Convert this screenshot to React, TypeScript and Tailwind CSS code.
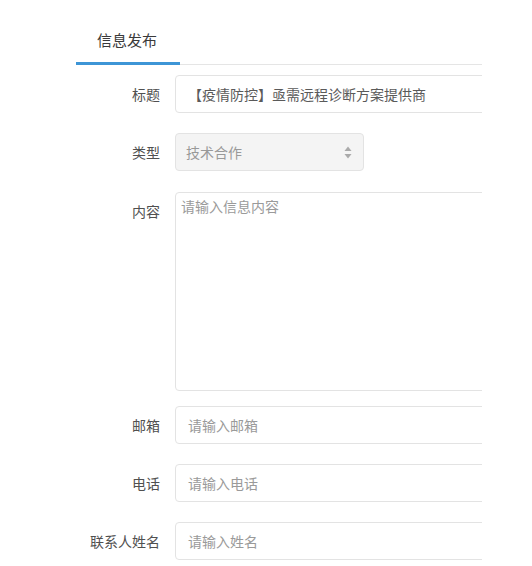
import React from "react";

const font = { fontFamily: '"Noto Sans CJK SC", "Noto Sans", sans-serif' };

function Label({ text }: { text: string }) {
  return (
    <div className="w-[84px] shrink-0 h-[38px] flex items-center justify-end text-[14px] text-[#505050]">
      {text}
    </div>
  );
}

function Field({ label, placeholder, value, mt }: { label: string; placeholder?: string; value?: string; mt: string }) {
  return (
    <div className={`flex gap-[15px] ${mt}`}>
      <Label text={label} />
      <div className="w-[420px] shrink-0 h-[38px] border border-[#e3e3e3] rounded-[4px] bg-white flex items-center pl-[12px] text-[14px]">
        {value ? <span className="text-[#5a5a5a]">{value}</span> : <span className="text-[#9a9a9a]">{placeholder}</span>}
      </div>
    </div>
  );
}

export default function App() {
  return (
    <div className="w-[532px] h-[566px] bg-white" style={font}>
      <div className="ml-[76px] w-[406px] overflow-hidden">
        <div className="h-[65px] flex items-end">
          <div className="w-[104px] h-[65px] border-b-[3px] border-[#3d95d6] flex items-center pl-[21px] pt-[18px] text-[15px] text-[#3a3a3a]">
            信息发布
          </div>
          <div className="flex-1 border-b border-[#e5e5e5]" />
        </div>

        <div className="mt-[10px] flex flex-col">
          <Field label="标题" value="【疫情防控】亟需远程诊断方案提供商" mt="" />

          <div className="flex gap-[15px] mt-[20px]">
            <Label text="类型" />
            <div className="w-[189px] shrink-0 h-[38px] border border-[#e3e3e3] rounded-[4px] bg-[#f4f4f4] flex items-center justify-between pl-[10px] pr-[11px] text-[14px] text-[#999]">
              <span>技术合作</span>
              <svg width="8" height="13" viewBox="0 0 8 13">
                <path d="M4 0.5 L7.5 5 L0.5 5 Z" fill="#aaa" />
                <path d="M4 12.5 L7.5 8 L0.5 8 Z" fill="#aaa" />
              </svg>
            </div>
          </div>

          <div className="flex gap-[15px] mt-[21px]">
            <Label text="内容" />
            <div className="w-[420px] shrink-0 h-[199px] border border-[#e3e3e3] rounded-[4px] bg-white pl-[5px] pt-[3px] text-[14px] leading-[20px] text-[#9a9a9a]">
              请输入信息内容
            </div>
          </div>

          <Field label="邮箱" placeholder="请输入邮箱" mt="mt-[15px]" />
          <Field label="电话" placeholder="请输入电话" mt="mt-[20px]" />
          <Field label="联系人姓名" placeholder="请输入姓名" mt="mt-[20px]" />
        </div>
      </div>
    </div>
  );
}
